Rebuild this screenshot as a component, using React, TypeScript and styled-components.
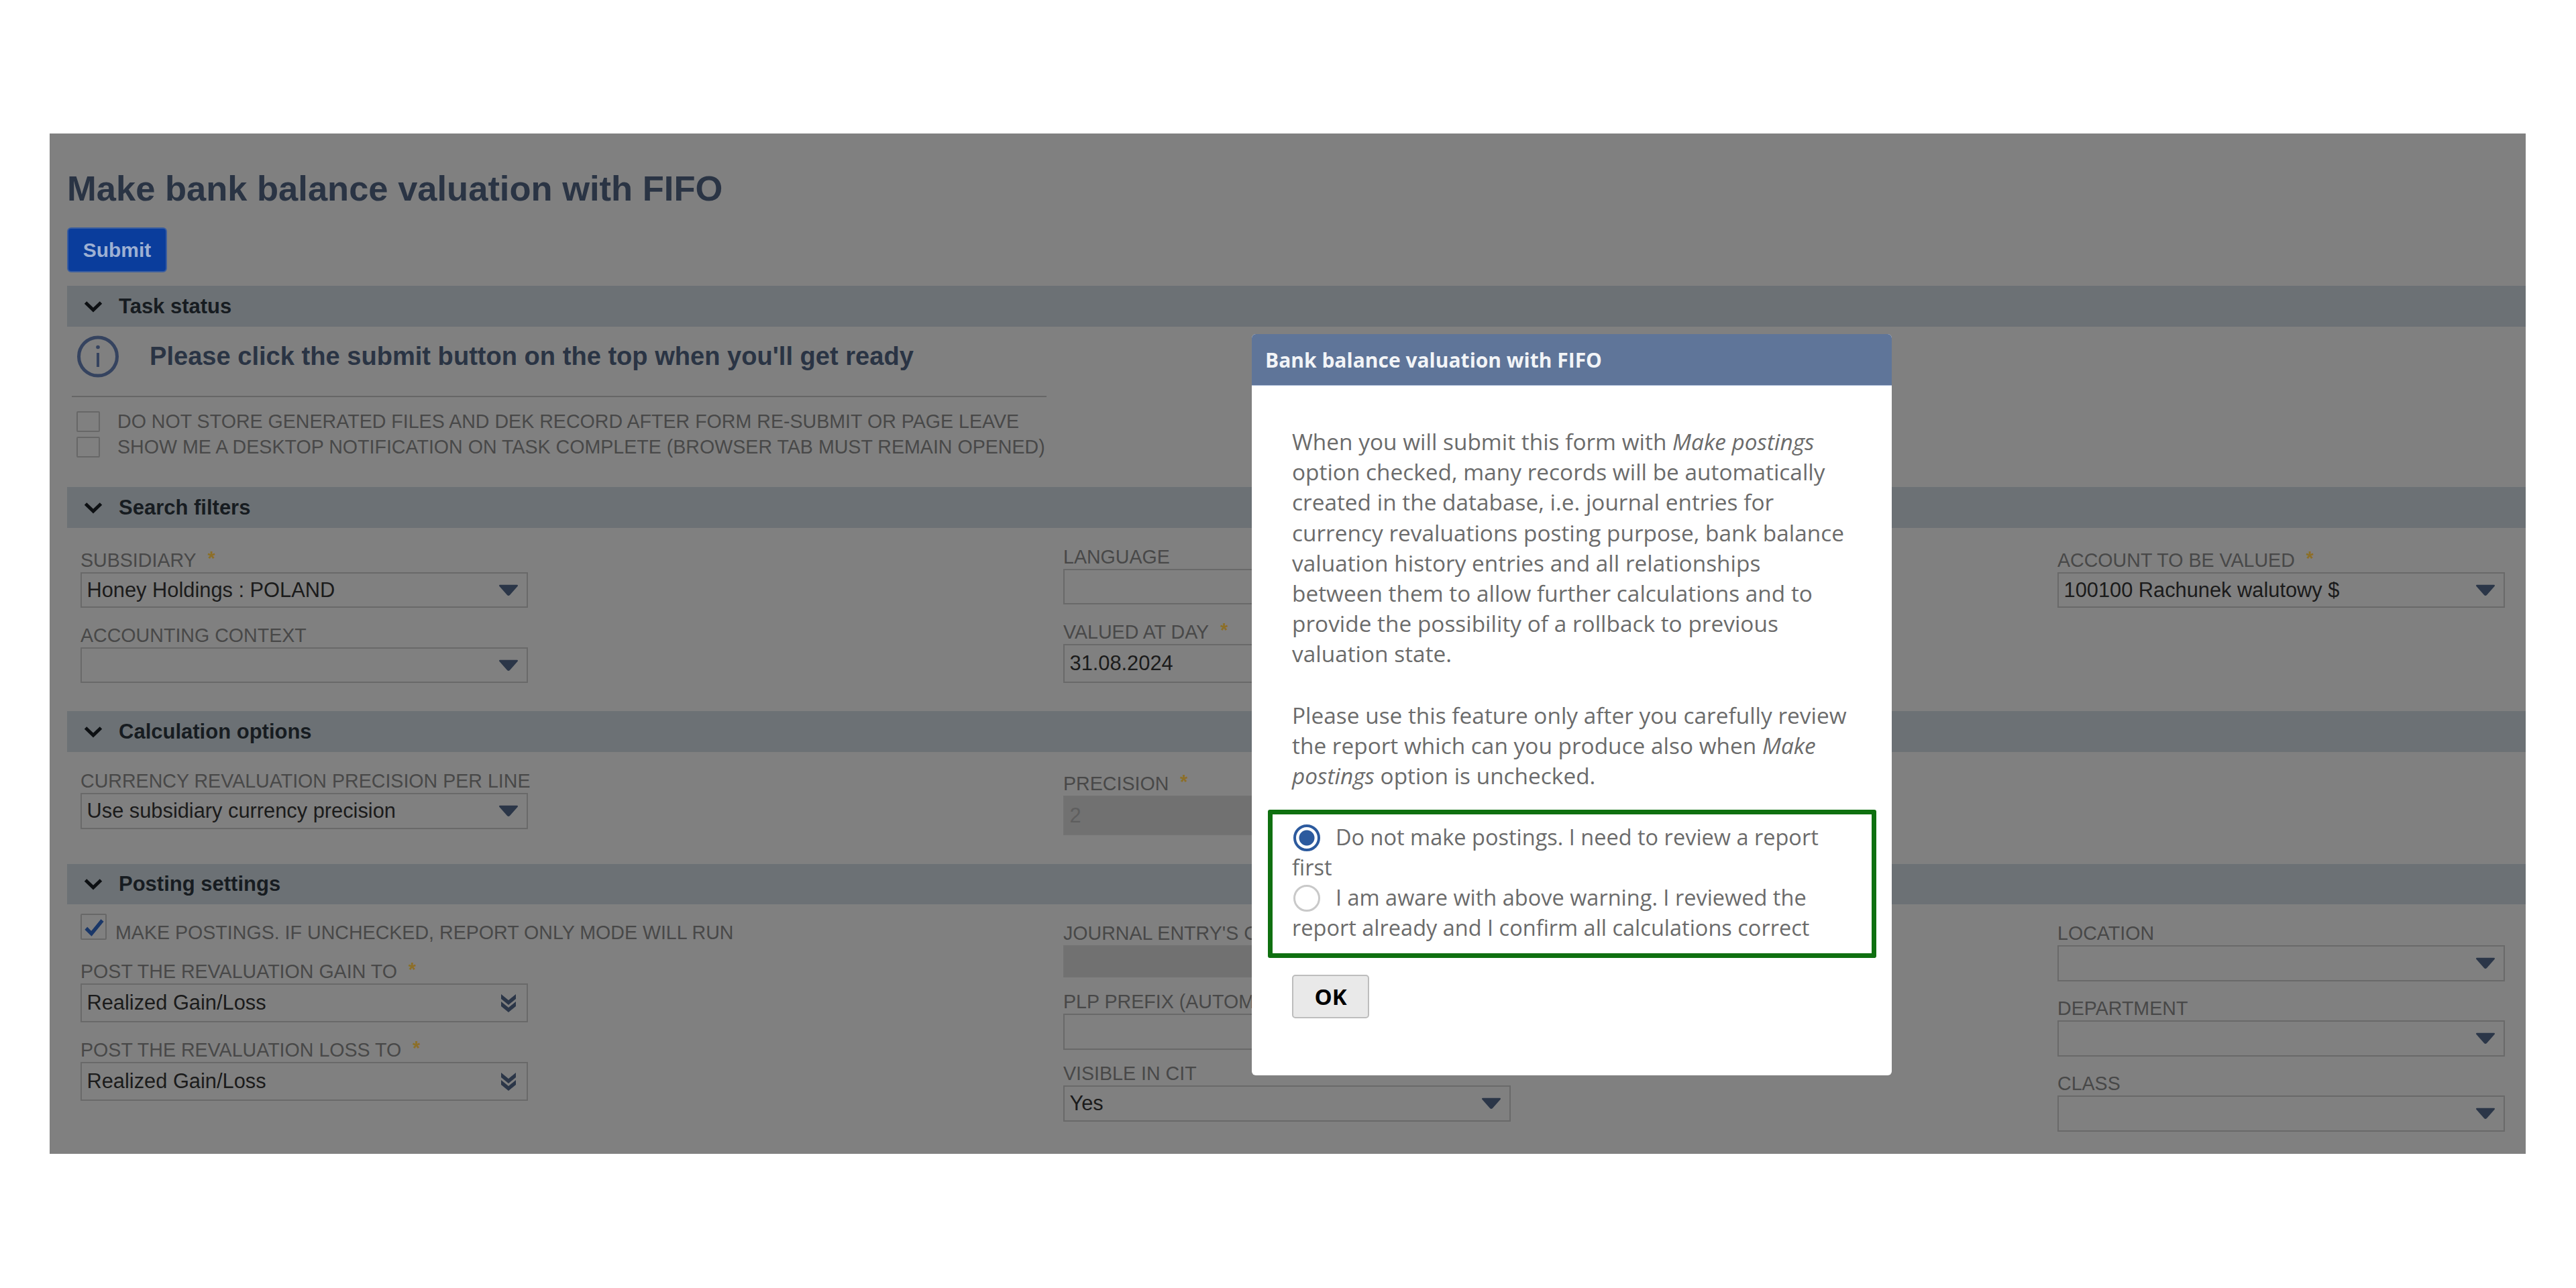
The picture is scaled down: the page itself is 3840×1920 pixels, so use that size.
import React from "react";
import styled, { createGlobalStyle } from "styled-components";

const GlobalStyle = createGlobalStyle`
  html, body {
    margin: 0;
    padding: 0;
    background: #fff;
  }
`;

const Canvas = styled.div`
  width: 3840px;
  height: 1920px;
  box-sizing: border-box;
  padding: 199px 75px 0 74px;
  background: #fff;
  overflow: hidden;
`;

const Screen = styled.div`
  position: relative;
  height: 1521px;
  box-sizing: border-box;
  padding: 52px 0 0 26px;
  background: #808080;
  font-family: "Liberation Sans", Arial, sans-serif;
  overflow: hidden;
`;

const Title = styled.h1`
  margin: 0;
  height: 60px;
  font-size: 52.5px;
  line-height: 60px;
  font-weight: 700;
  color: #2a3444;
`;

const SubmitButton = styled.button`
  display: block;
  width: 149px;
  height: 67px;
  margin-top: 28px;
  padding: 0;
  border: 2px solid #3a5d9f;
  border-radius: 6px;
  background: #0a3d9c;
  color: #9db0d3;
  font-family: inherit;
  font-size: 30px;
  font-weight: 700;
`;

const SectionBar = styled.div<{ $top?: number; $h?: number }>`
  display: flex;
  align-items: center;
  gap: 24px;
  height: ${({ $h }) => $h ?? 61}px;
  margin-top: ${({ $top }) => $top ?? 0}px;
  padding-left: 25px;
  background: #6c7175;
  color: #171c21;
  font-size: 31px;
  font-weight: 700;
`;

const Notice = styled.div`
  display: flex;
  align-items: center;
  gap: 45px;
  width: 1446px;
  height: 63px;
  margin: 13px 0 0 7px;
  padding: 0 0 27px 7px;
  border-bottom: 2px solid #666;
  color: #2a3444;
  font-size: 38.1px;
  font-weight: 700;
`;

const CheckRows = styled.div`
  display: flex;
  flex-direction: column;
  gap: 7px;
  margin: 21px 0 44px 14px;
`;

const CheckRow = styled.div`
  display: flex;
  align-items: center;
  gap: 26px;
  height: 31px;
  color: #484848;
  font-size: 28.6px;
  white-space: nowrap;
`;

const Checkbox = styled.span<{ $size?: number }>`
  display: block;
  flex: none;
  box-sizing: border-box;
  width: ${({ $size }) => $size ?? 35}px;
  height: ${({ $size }) => $size ?? 31}px;
  border: 2px solid #676767;
  border-radius: 2px;
  background: #808080;

  svg {
    display: block;
    width: 100%;
    height: 100%;
  }
`;

const FieldGrid = styled.div<{ $bottom: number }>`
  display: grid;
  grid-template-columns: 1465px 1482px 667px;
  padding: 0 0 ${({ $bottom }) => $bottom}px 20px;
`;

const FieldColumn = styled.div<{ $top: number }>`
  display: flex;
  flex-direction: column;
  padding-top: ${({ $top }) => $top}px;
`;

const Field = styled.div<{ $gap?: number }>`
  margin-top: ${({ $gap }) => $gap ?? 0}px;
`;

const Label = styled.div`
  display: flex;
  align-items: center;
  height: 35px;
  color: #484848;
  font-size: 28.6px;
  white-space: nowrap;
`;

const Required = styled.span`
  margin-left: 17px;
  color: #8d6f28;
  font-weight: 700;
  transform: translateY(-3px);
`;

const Control = styled.div<{ $h: number; $disabled?: boolean }>`
  position: relative;
  display: flex;
  align-items: center;
  box-sizing: border-box;
  width: 667px;
  height: ${({ $h }) => $h}px;
  padding-left: 7.5px;
  border: 2px solid ${({ $disabled }) => ($disabled ? "#727272" : "#696969")};
  background: ${({ $disabled }) => ($disabled ? "#717171" : "#808080")};
  color: ${({ $disabled }) => ($disabled ? "#5e5e5e" : "#1b1b1b")};
  font-size: 30.8px;
  white-space: nowrap;
`;

const ControlIcon = styled.svg`
  position: absolute;
  right: 13px;
  top: 50%;
  transform: translateY(-50%);
`;

const CheckText = styled.span`
  align-self: flex-end;
  margin-bottom: -6px;
  color: #484848;
  font-size: 28.6px;
  white-space: nowrap;
`;

const MakePostings = styled.div`
  display: flex;
  gap: 13px;
  height: 39px;
`;

const Modal = styled.div`
  position: absolute;
  left: 1792px;
  top: 299px;
  width: 954px;
  border-radius: 6px;
  background: #fff;
  font-family: "Open Sans", sans-serif;
  overflow: hidden;
`;

const ModalHeader = styled.div`
  display: flex;
  align-items: center;
  height: 77px;
  padding-left: 20px;
  background: #5f7599;
  color: #f2f4f7;
  font-size: 30px;
  font-weight: 700;
  border-bottom: 1px solid #a9bad6;
  box-sizing: border-box;
`;

const ModalBody = styled.div`
  padding: 61px 23px 85px 24px;
  color: #6b6b6b;
  font-size: 33.4px;
  line-height: 45.2px;
`;

const Paragraph = styled.p<{ $top?: number }>`
  margin: ${({ $top }) => $top ?? 0}px 0 0 36px;
  width: 835px;
`;

const ChoiceBox = styled.div`
  box-sizing: border-box;
  height: 221px;
  margin-top: 28px;
  padding: 11px 20px 0 29px;
  border: 7px solid #0f7010;
  border-radius: 3px;
  font-size: 32.5px;
`;

const Choice = styled.div`
  line-height: 45px;
  width: 820px;
`;

const Radio = styled.span<{ $checked?: boolean }>`
  display: inline-block;
  box-sizing: border-box;
  width: 40px;
  height: 40px;
  margin: 0 23px 0 2px;
  vertical-align: -9px;
  border-radius: 50%;
  border: ${({ $checked }) => ($checked ? "4px solid #2c5a9e" : "3px solid #c9c9c9")};
  background: ${({ $checked }) =>
    $checked ? "radial-gradient(circle, #2c5a9e 0 11px, #fff 12px)" : "#fff"};
`;

const OkButton = styled.button`
  display: block;
  width: 115px;
  height: 65px;
  margin: 25px 0 0 36px;
  padding: 0;
  border: 2px solid #bdbdbd;
  border-radius: 5px;
  background: #e9e9e9;
  color: #000;
  font-family: "Open Sans", sans-serif;
  font-size: 33px;
  font-weight: 700;
`;

const Chevron = () => (
  <svg width="28" height="18" viewBox="0 0 28 18">
    <path d="M2.5 3 14 14 25.5 3" fill="none" stroke="#0d1013" strokeWidth="5" />
  </svg>
);

const InfoIcon = () => (
  <svg width="64" height="63" viewBox="0 0 64 63" style={{ flex: "none" }}>
    <circle cx="32" cy="31.5" r="28.5" fill="none" stroke="#35435f" strokeWidth="5" />
    <circle cx="32" cy="17.5" r="2.8" fill="#35435f" />
    <rect x="30" y="26" width="4" height="21" fill="#35435f" />
  </svg>
);

const ArrowDown = () => (
  <ControlIcon width="28" height="17" viewBox="0 0 28 17">
    <path d="M1.5 0h25a1.4 1.4 0 0 1 1 2.4L16 15.4a2.8 2.8 0 0 1-4 0L.5 2.4A1.4 1.4 0 0 1 1.5 0z" fill="#2b3648" />
  </ControlIcon>
);

const DoubleArrow = () => (
  <ControlIcon width="28" height="30" viewBox="0 0 28 30">
    <path d="M3 2 14 11 25 2v7L14 18 3 9z" fill="#2b3648" />
    <path d="M3 13 14 22 25 13v7L14 29 3 20z" fill="#2b3648" />
  </ControlIcon>
);

interface InputFieldProps {
  label: string;
  h: number;
  gap?: number;
  value?: string;
  required?: boolean;
  disabled?: boolean;
  arrow?: "single" | "double";
}

const InputField: React.FC<InputFieldProps> = ({ label, h, gap, value, required, disabled, arrow }) => (
  <Field $gap={gap}>
    <Label>
      {label}
      {required && <Required>*</Required>}
    </Label>
    <Control $h={h} $disabled={disabled}>
      {value}
      {arrow === "single" && <ArrowDown />}
      {arrow === "double" && <DoubleArrow />}
    </Control>
  </Field>
);

export default function App() {
  return (
    <>
      <GlobalStyle />
      <Canvas>
        <Screen>
          <Title>Make bank balance valuation with FIFO</Title>
          <SubmitButton>Submit</SubmitButton>

          <SectionBar $top={20}>
            <Chevron />
            Task status
          </SectionBar>
          <Notice>
            <InfoIcon />
            Please click the submit button on the top when you'll get ready
          </Notice>
          <CheckRows>
            <CheckRow>
              <Checkbox />
              DO NOT STORE GENERATED FILES AND DEK RECORD AFTER FORM RE-SUBMIT OR PAGE LEAVE
            </CheckRow>
            <CheckRow>
              <Checkbox />
              SHOW ME A DESKTOP NOTIFICATION ON TASK COMPLETE (BROWSER TAB MUST REMAIN OPENED)
            </CheckRow>
          </CheckRows>

          <SectionBar>
            <Chevron />
            Search filters
          </SectionBar>
          <FieldGrid $bottom={42}>
            <FieldColumn $top={31}>
              <InputField label="SUBSIDIARY" required h={53} value="Honey Holdings : POLAND" arrow="single" />
              <InputField label="ACCOUNTING CONTEXT" gap={24} h={53} arrow="single" />
            </FieldColumn>
            <FieldColumn $top={26}>
              <InputField label="LANGUAGE" h={53} />
              <InputField label="VALUED AT DAY" required gap={24} h={58} value="31.08.2024" />
            </FieldColumn>
            <FieldColumn $top={31}>
              <InputField label="ACCOUNT TO BE VALUED" required h={53} value="100100 Rachunek walutowy $" arrow="single" />
            </FieldColumn>
          </FieldGrid>

          <SectionBar>
            <Chevron />
            Calculation options
          </SectionBar>
          <FieldGrid $bottom={43}>
            <FieldColumn $top={26}>
              <InputField label="CURRENCY REVALUATION PRECISION PER LINE" h={54} value="Use subsidiary currency precision" arrow="single" />
            </FieldColumn>
            <FieldColumn $top={30}>
              <InputField label="PRECISION" required h={59} value="2" disabled />
            </FieldColumn>
          </FieldGrid>

          <SectionBar $h={60}>
            <Chevron />
            Posting settings
          </SectionBar>
          <FieldGrid $bottom={0}>
            <FieldColumn $top={14}>
              <MakePostings>
                <Checkbox $size={39}>
                  <svg viewBox="0 0 39 39">
                    <path d="M7 22 16 31 34 9" fill="none" stroke="#1a3768" strokeWidth="6" />
                  </svg>
                </Checkbox>
                <CheckText>MAKE POSTINGS. IF UNCHECKED, REPORT ONLY MODE WILL RUN</CheckText>
              </MakePostings>
              <InputField label="POST THE REVALUATION GAIN TO" required gap={30} h={58} value="Realized Gain/Loss" arrow="double" />
              <InputField label="POST THE REVALUATION LOSS TO" required gap={24} h={58} value="Realized Gain/Loss" arrow="double" />
            </FieldColumn>
            <FieldColumn $top={26}>
              <InputField label="JOURNAL ENTRY'S C" h={48} disabled />
              <InputField label="PLP PREFIX (AUTOM" gap={19} h={54} />
              <InputField label="VISIBLE IN CIT" gap={18} h={54} value="Yes" arrow="single" />
            </FieldColumn>
            <FieldColumn $top={26}>
              <InputField label="LOCATION" h={54} arrow="single" />
              <InputField label="DEPARTMENT" gap={23} h={54} arrow="single" />
              <InputField label="CLASS" gap={23} h={54} arrow="single" />
            </FieldColumn>
          </FieldGrid>

          <Modal>
            <ModalHeader>Bank balance valuation with FIFO</ModalHeader>
            <ModalBody>
              <Paragraph>
                When you will submit this form with <em>Make postings</em> option checked, many records will be
                automatically created in the database, i.e. journal entries for currency revaluations posting purpose,
                bank balance valuation history entries and all relationships between them to allow further calculations
                and to provide the possibility of a rollback to previous valuation state.
              </Paragraph>
              <Paragraph $top={46}>
                Please use this feature only after you carefully review the report which can you produce also when{" "}
                <em>Make postings</em> option is unchecked.
              </Paragraph>
              <ChoiceBox>
                <Choice>
                  <Radio $checked />
                  Do not make postings. I need to review a report first
                </Choice>
                <Choice>
                  <Radio />
                  I am aware with above warning. I reviewed the report already and I confirm all calculations correct
                </Choice>
              </ChoiceBox>
              <OkButton>OK</OkButton>
            </ModalBody>
          </Modal>
        </Screen>
      </Canvas>
    </>
  );
}
